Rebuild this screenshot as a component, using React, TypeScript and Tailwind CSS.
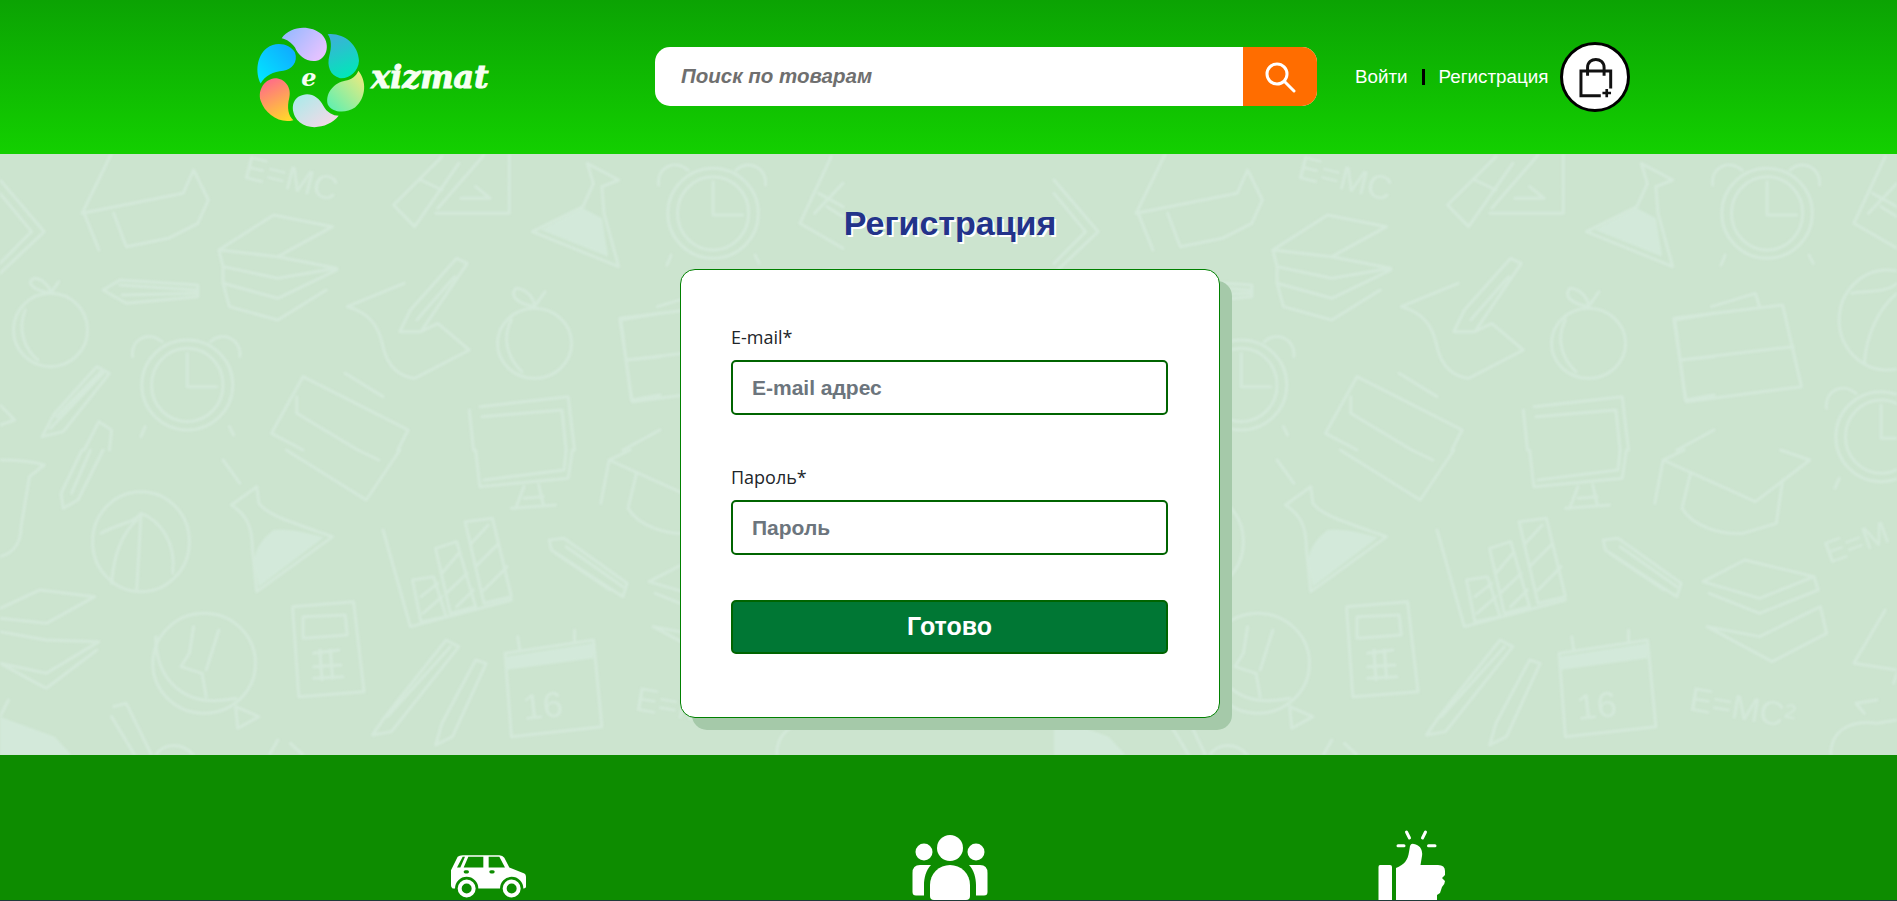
import React from "react";

// Doodles traced per area of the page, in the coordinates of the crop they came from.
const upperLeft = [
  "M0 90 L105 245 L0 370 M0 130 L75 245 L0 340",
  "M265 10 L195 190 L435 130 L460 60 L495 150 L470 220 L400 265 L300 290 L270 190 M200 190 L235 300",
  "M1050 20 L935 165 L985 230 L1090 40 M1000 90 L1050 120 M1210 15 L1210 190 L1035 190 M1150 15 L1040 175 M1095 145 L1165 145 M1130 110 L1160 140",
  "M1395 40 L1470 90 L1430 110 L1435 190 L1470 350 L1265 245 L1385 170 L1410 100 Z",
  "M520 300 L650 195 L790 230 L660 320 Z M520 300 L530 350 L660 385 L800 355 L660 320 M530 355 L530 400 L660 445 L800 360 M530 400 L545 470 L660 510 L775 420",
  "M120 430 C80 420 60 400 80 385 C100 385 120 410 120 430 L140 395 M60 480 C40 540 60 600 90 630",
  "M245 420 L285 390 L470 405 L470 440 L300 460 Z M285 405 L465 420 M290 435 L465 430",
  "M960 400 L825 470 C880 490 900 530 910 590 C920 650 950 680 985 685 L1115 600 L1040 520 L1000 545 M950 545 L1000 545 L1110 340 L1085 325 L975 480 L950 545 M990 510 L1080 380",
  "M1270 470 C1230 460 1210 440 1225 415 C1250 415 1270 445 1270 470 L1295 425 M1215 510 C1190 570 1210 630 1240 665",
  "M1568 490 L1475 510 L1500 750 L1568 735 M1490 630 L1568 620",
  "M100 860 L130 790 L230 650 L260 670 L150 845 Z M135 800 L240 665 M120 835 L245 670",
  "M720 680 L645 850 L720 900 M720 680 L970 840 L945 900 M705 740 L705 790 L850 900 M820 670 L910 740",
  "M1140 770 L1350 740 L1365 900 M1145 800 L1335 780 L1345 900 M1115 780 L1125 900",
  "M1480 900 L1568 840 M0 765 L35 810 L0 825 M200 900 L235 815 L265 840 L260 900",
];

const lowerLeft = [
  "M0 30 C40 30 80 35 105 45 L70 80 L50 230 C50 280 30 310 0 320",
  "M195 0 L145 130 L150 175 L185 150 L245 0 M170 130 L215 0",
  "M335 190 L325 420 M240 250 C280 220 320 220 335 190 C380 210 420 280 410 370 M265 400 C270 320 290 250 325 210",
  "M550 165 L610 110 L615 160 C640 200 700 220 790 260 L610 425 L600 300 C600 220 580 190 550 165",
  "M910 240 L975 530 L1215 450 M980 390 L1030 380 L1060 500 L1000 515 Z M1035 295 L1085 275 L1130 470 L1070 490 Z M1105 215 L1170 205 L1215 440 L1150 460 Z M1000 440 L1040 400 M1005 490 L1050 440 M1050 370 L1090 310 M1060 430 L1110 370 M1085 470 L1125 420 M1120 280 L1160 225 M1130 350 L1185 280 M1150 420 L1205 350",
  "M1305 270 L1340 265 L1490 400 L1480 440 L1310 300 Z M1345 290 L1480 410 M1320 310 L1450 420",
  "M0 475 L95 420 L225 440 L110 520 L0 505 M0 545 L110 570 L235 575 L110 670 L0 640 M0 640 L110 715 L230 600",
  "M370 560 C370 680 430 780 560 745 M460 530 L450 610 L430 650 L480 670 L490 740 M520 540 L490 660 M560 770 L615 800 L565 835 Z",
  "M695 470 L840 455 L865 725 L710 740 Z M720 500 L820 495 L825 555 L720 565 Z M745 610 L805 600 M745 650 L810 645 M745 685 L815 680 M760 600 L765 690 M785 600 L790 685",
  "M885 855 L915 800 L1060 570 L1090 590 L930 845 Z M920 800 L1070 590 M1035 885 L1050 820 L1130 630 L1155 640 L1075 860 Z",
  "M1200 610 L1410 570 L1430 830 L1215 860 Z M1230 560 L1235 600 M1365 540 L1365 580",
  "M20 750 L0 800 M270 770 L300 760 L360 915 M265 800 L320 915 M370 915 C390 880 430 875 460 915 M660 870 L640 915 M690 880 L720 915 M530 30 L570 100",
  "M1130 0 L1140 110 L1350 85 L1360 0 M1150 90 L1340 60 L1345 0 M1245 110 L1225 175 M1280 105 L1290 160 M1215 175 L1320 165 M1245 145 L1290 140",
  "M680 0 L870 150 L950 0 M850 0 L900 30",
];

const upperRight = [
  "M1035 505 L1295 465 L1340 710 L1065 755 Z M1125 470 L1230 430 L1240 470 M1050 630 L1320 590",
  "M1460 430 C1500 420 1540 430 1568 400 M1490 640 C1495 560 1520 480 1568 430",
  "M1540 20 L1465 220 L1568 295 M1500 190 L1568 100 M1530 170 L1568 200 M1510 130 L1568 170",
];

const lowerRight = [
  "M1010 30 L1060 0 M1010 30 L1230 155 L1360 30 L1290 0 M1010 30 L990 160 M1075 70 L1055 175 C1080 230 1150 255 1200 250 L1280 220 L1295 90",
  "M1105 395 L1205 330 L1370 380 L1240 445 Z M1370 380 L1380 420 L1240 490 L1120 430 M1385 470 L1240 560 L1115 530 M1115 530 L1270 635 L1400 550 L1385 470",
  "M1540 480 L1465 640 L1568 660 M1568 670 L1560 700",
  "M1410 915 C1410 830 1470 810 1520 820 L1568 810 M1490 790 L1470 760 L1520 750",
];

const stroke = "fill-none stroke-[#d4e9da] [stroke-width:3] [stroke-linejoin:round] [stroke-linecap:round] [vector-effect:non-scaling-stroke]";

const Paths = ({ items }: { items: string[] }) => (
  <>
    {items.map((d, i) => (
      <path key={i} d={d} className={stroke} />
    ))}
  </>
);

const Ring = ({ cx, cy, rx, ry }: { cx: number; cy: number; rx: number; ry: number }) => (
  <ellipse cx={cx} cy={cy} rx={rx} ry={ry} className={stroke} />
);

const Clock = ({ x, y }: { x: number; y: number }) => (
  <g transform={`translate(${x} ${y})`}>
    <Ring cx={445} cy={705} rx={108} ry={135} />
    <Ring cx={445} cy={705} rx={85} ry={110} />
    <path
      d="M445 610 L445 710 L515 710 M315 620 C310 570 350 540 385 575 M500 575 C530 540 575 570 570 620 M345 830 L335 860 M545 830 L555 855"
      className={stroke}
    />
  </g>
);

// One tile of the school doodles, it repeats every 1054px across the page
const DoodleTile = () => (
  <>
    <g transform="translate(0 -4) scale(0.4209 0.3333)">
      <Paths items={upperLeft} />
      <Ring cx={120} cy={540} rx={88} ry={110} />
      <Ring cx={1270} cy={580} rx={88} ry={105} />
      <Clock x={0} y={0} />
      <path d="M1385 175 L1285 240 L1445 320 L1430 205 Z" fill="#d3e9da" />
    </g>
    <g transform="translate(0 296) scale(0.4209 0.3333)">
      <Paths items={lowerLeft} />
      <Ring cx={335} cy={275} rx={115} ry={150} />
      <Ring cx={485} cy={640} rx={122} ry={150} />
      <path d="M650 240 C700 235 730 250 770 262 L615 410 L605 340 C605 290 630 260 650 240 Z" fill="#d3e9da" />
      <path d="M1200 620 L1410 580 L1410 625 L1200 660 Z" fill="#d3e9da" />
      <path d="M0 800 L130 860 L170 915 L0 915 Z" fill="#d3e9da" />
    </g>
    <g transform="translate(186 -4) scale(0.419 0.3333)">
      <Paths items={upperRight} />
      <Ring cx={1545} cy={510} rx={115} ry={150} />
      <Clock x={813} y={-515} />
      <Clock x={1085} y={155} />
    </g>
    <g transform="translate(186 296) scale(0.419 0.3333)">
      <Paths items={lowerRight} />
    </g>
    <g className="fill-[#d4e9da] font-['Liberation_Sans',sans-serif]">
      <text x="242" y="24" fontSize="34" transform="rotate(14 242 24)">E=MC</text>
      <text x="634" y="556" fontSize="34" transform="rotate(10 634 556)">E=MC²</text>
      <text x="775" y="410" fontSize="32" transform="rotate(-20 775 410)">E=M</text>
      <text x="524" y="566" fontSize="36" transform="rotate(-6 524 566)">16</text>
    </g>
  </>
);

const Logo = () => (
  <svg viewBox="75 70 720 320" className="w-[240px] h-[107px]">
    <defs>
      <linearGradient id="p1" x1="0" y1="0" x2="1" y2="0.6">
        <stop offset="0" stopColor="#8fb8ff" />
        <stop offset="1" stopColor="#e4c2ff" />
      </linearGradient>
      <linearGradient id="p2" x1="0.3" y1="0" x2="0.6" y2="1">
        <stop offset="0" stopColor="#3cb0d8" />
        <stop offset="1" stopColor="#00e8b8" />
      </linearGradient>
      <linearGradient id="p3" x1="0" y1="1" x2="1" y2="0">
        <stop offset="0" stopColor="#55f0b4" />
        <stop offset="1" stopColor="#f6ea7c" />
      </linearGradient>
      <linearGradient id="p4" x1="0" y1="0" x2="1" y2="1">
        <stop offset="0" stopColor="#a4ecea" />
        <stop offset="1" stopColor="#ffd6e6" />
      </linearGradient>
      <linearGradient id="p5" x1="0.3" y1="0" x2="0.7" y2="1">
        <stop offset="0" stopColor="#ff6a8a" />
        <stop offset="1" stopColor="#ffd52c" />
      </linearGradient>
      <linearGradient id="p6" x1="0" y1="1" x2="1" y2="0">
        <stop offset="0" stopColor="#00eaff" />
        <stop offset="1" stopColor="#12a4ff" />
      </linearGradient>
    </defs>
    <path fill="url(#p1)" d="M155 112 C180 75 240 70 275 100 C300 125 295 170 260 180 C230 185 205 165 195 140 C185 125 170 115 155 112Z" />
    <path fill="url(#p2)" d="M293 100 C340 95 385 130 387 180 C385 215 355 235 330 232 C300 225 290 195 298 165 C305 140 305 115 293 100Z" />
    <path fill="url(#p3)" d="M385 210 C410 240 410 290 375 320 C345 340 305 335 293 310 C285 275 315 245 345 240 C365 237 380 225 385 210Z" />
    <path fill="url(#p4)" d="M326 345 C300 380 240 390 210 365 C185 345 180 305 205 288 C235 270 265 285 280 315 C290 335 310 345 326 345Z" />
    <path fill="url(#p5)" d="M190 358 C150 370 105 340 92 300 C82 265 105 235 135 232 C165 232 185 260 178 290 C170 320 175 345 190 358Z" />
    <path fill="url(#p6)" d="M92 248 C75 215 80 165 110 142 C140 120 180 130 195 155 C205 185 185 205 160 210 C130 212 105 225 92 248Z" />
    <text x="214" y="256" fontSize="72" fontWeight="700" fontStyle="italic" fill="#f6fff2" className="font-['DejaVu_Serif',serif]">e</text>
    <text x="424" y="262" fontSize="96" fontWeight="700" fontStyle="italic" fill="#f6fff2" stroke="#f6fff2" strokeWidth="3" textLength="352" lengthAdjust="spacingAndGlyphs" className="font-['DejaVu_Serif',serif]">xizmat</text>
  </svg>
);

const SearchIcon = () => (
  <svg viewBox="0 0 32 32" className="w-8 h-8" fill="none" stroke="#fff" strokeWidth="3" strokeLinecap="round">
    <circle cx="13" cy="13" r="10" />
    <path d="M20.5 20.5 L30 30" />
  </svg>
);

const BagIcon = () => (
  <svg viewBox="1010 40 115 130" className="w-[38px] h-[43px]" fill="none" stroke="#111" strokeWidth="9">
    <path d="M1085 160 L1025 160 L1025 85 L1115 85 L1115 138" />
    <path d="M1045 100 L1045 75 C1045 42 1095 42 1095 75 L1095 100" />
    <path d="M1090 152 L1116 152 M1103 140 L1103 165" strokeWidth="8" />
  </svg>
);

const CarIcon = () => (
  <svg viewBox="30 60 225 128" className="w-[75px] h-[43px]">
    <path
      fill="#fff"
      d="M30 135 L30 105 L50 65 Q55 60 65 60 L175 60 Q185 60 190 68 L205 97 L250 115 Q255 118 255 125 L255 155 Q255 160 248 160 L247 160 A35 35 0 0 0 177 160 L112 160 A35 35 0 0 0 42 160 L35 160 Q30 158 30 150 Z"
    />
    <path fill="#0d8c00" d="M48 97 L65 65 L72 65 L58 97 Z M68 97 L82 65 L127 65 L127 97 Z M143 65 L175 65 L192 97 L143 97 Z" />
    <rect x="68" y="105" width="16" height="10" rx="5" fill="#0d8c00" />
    <rect x="145" y="105" width="16" height="10" rx="5" fill="#0d8c00" />
    <circle cx="77" cy="160" r="21" fill="none" stroke="#fff" strokeWidth="12" />
    <circle cx="212" cy="160" r="21" fill="none" stroke="#fff" strokeWidth="12" />
  </svg>
);

const PeopleIcon = () => (
  <svg viewBox="912 833 76 70" className="w-[76px] h-[70px]" fill="#fff">
    <circle cx="950" cy="848" r="13" />
    <circle cx="924" cy="852" r="8.5" />
    <circle cx="976" cy="852" r="8.5" />
    <path d="M930 885 A20 20 0 0 1 970 885 V896 Q970 900 966 900 H934 Q930 900 930 896 Z" />
    <path d="M920 865 H931 C926 870 924 878 924 885 V895.5 H916 Q912.5 895.5 912.5 892 V873 Q912.5 865 920 865 Z" />
    <path d="M980 865 H969 C974 870 976 878 976 885 V895.5 H984 Q987.5 895.5 987.5 892 V873 Q987.5 865 980 865 Z" />
  </svg>
);

const ThumbIcon = () => (
  <svg viewBox="1378 829 70 73" className="w-[70px] h-[73px]" fill="#fff">
    <path d="M1407.5 832 L1410.5 838 M1426.5 832 L1423.5 838 M1399 845.7 H1405 M1429.5 845.7 H1436" stroke="#fff" strokeWidth="3" strokeLinecap="round" />
    <path d="M1381 865 H1391 Q1393 865 1393 867 V902 H1379.5 V867 Q1379.5 865 1381 865 Z" />
    <path d="M1397 868 C1405 865 1409 860 1410 852 L1411 846 Q1412 843 1415 844 C1421 845 1424 850 1423 856 L1421.5 865 H1439 Q1446 865 1446 871 V875 L1443 878 L1446 881 Q1446 884 1443 887 L1441 893 L1438 895 V902 H1397 Z" />
  </svg>
);

const Field = ({ label, placeholder, type }: { label: string; placeholder: string; type: string }) => (
  <div>
    <label className="block h-6 mb-[11px] text-[18px] leading-6 text-[#212529] font-['Open_Sans',sans-serif]">{label}</label>
    <input
      type={type}
      placeholder={placeholder}
      className="block w-full h-[55px] px-[19px] pt-[1px] bg-white border-2 border-[#006400] rounded-[5px] outline-none text-[21px] font-bold placeholder:text-[#6c757d] font-['Liberation_Sans',sans-serif]"
    />
  </div>
);

export default function App() {
  return (
    <div className="h-[901px] overflow-hidden flex flex-col font-['Liberation_Sans',sans-serif]">
      <header className="h-[154px] shrink-0 flex items-center pl-[255px] bg-gradient-to-b from-[#0ba303] to-[#13d000]">
        <Logo />
        <form className="ml-[160px] mb-[1px] w-[662px] h-[59px] flex rounded-[15px] overflow-hidden bg-white">
          <input
            placeholder="Поиск по товарам"
            className="flex-1 min-w-0 pl-[26px] pb-[1px] outline-none italic font-bold text-[20.5px] placeholder:text-[#6f6f6f]"
          />
          <button type="button" className="w-[74px] flex items-center justify-center bg-[#ff6d00]">
            <SearchIcon />
          </button>
        </form>
        <nav className="ml-[38px] flex items-center text-[18.8px] text-white">
          <a>Войти</a>
          <span className="mx-[14px] w-[3px] h-4 bg-black" />
          <a>Регистрация</a>
        </nav>
        <button type="button" className="ml-[12px] w-[70px] h-[70px] rounded-full bg-white border-[3px] border-black flex items-center justify-center">
          <BagIcon />
        </button>
      </header>

      <main className="relative h-[601px] shrink-0 overflow-hidden bg-[#cce4cf] flex flex-col items-center pl-[3px]">
        <svg className="absolute inset-0 w-full h-full blur-[1px]" viewBox="0 0 1897 601">
          <defs>
            <g id="tile">
              <DoodleTile />
            </g>
          </defs>
          <use href="#tile" />
          <use href="#tile" x="1054" />
        </svg>
        <h1 className="relative mt-[50px] mb-[27px] text-[34px] leading-[38px] font-bold text-[#23338a] [text-shadow:2px_2px_0_#fff]">
          Регистрация
        </h1>
        <form className="relative w-[540px] h-[449px] pt-[55px] pl-[50px] pr-[51px] bg-white border border-[#008000] rounded-[15px] shadow-[12px_12px_0_#a5c9a9]">
          <Field label="E-mail*" placeholder="E-mail адрес" type="email" />
          <div className="mt-[50px]">
            <Field label="Пароль*" placeholder="Пароль" type="password" />
          </div>
          <button
            type="button"
            className="mt-[45px] block w-full h-[54px] rounded-[5px] bg-[#007734] border-2 border-[#006400] text-white text-[25px] font-bold"
          >
            Готово
          </button>
        </form>
      </main>

      <footer className="flex-1 min-h-0 overflow-hidden bg-[#0d8c00] border-b border-[#1f3a3a] flex justify-center pl-[3px]">
        <div className="w-[462px] flex justify-center pt-[100px]">
          <CarIcon />
        </div>
        <div className="w-[462px] flex justify-center pt-[78px]">
          <PeopleIcon />
        </div>
        <div className="w-[462px] flex justify-center pt-[74px]">
          <ThumbIcon />
        </div>
      </footer>
    </div>
  );
}
